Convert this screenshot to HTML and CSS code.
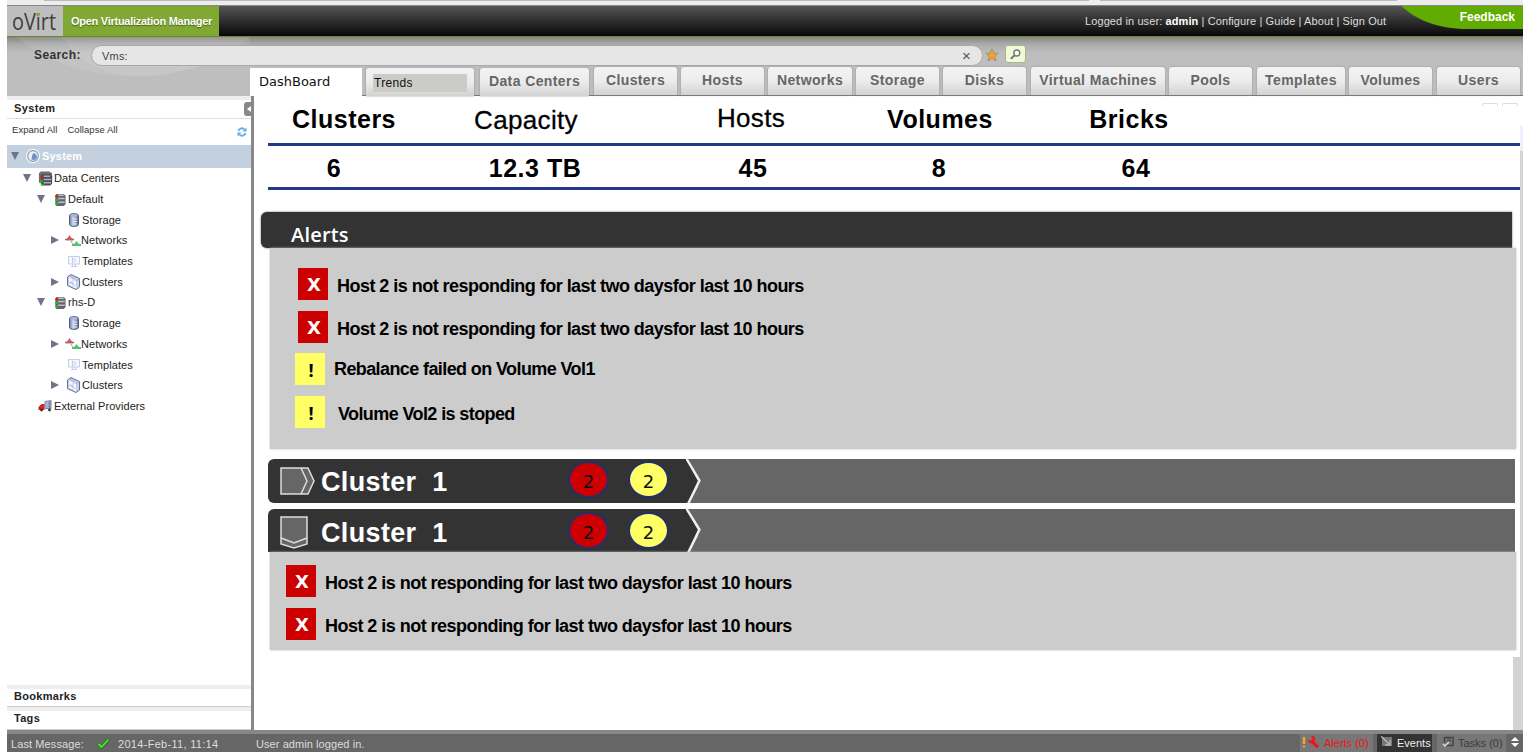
FILE: index.html
```html
<!DOCTYPE html>
<html lang="en">
<head>
<meta charset="utf-8">
<title>oVirt Open Virtualization Manager</title>
<link rel="stylesheet" href="styles.css">
</head>
<body>
<svg class="defs" width="0" height="0">
  <defs>
    <linearGradient id="cyl" x1="0" x2="1"><stop offset="0" stop-color="#707da8"/><stop offset=".4" stop-color="#cdd6ee"/><stop offset="1" stop-color="#59658c"/></linearGradient>
    <symbol id="dc" viewBox="0 0 12 14"><path d="M2 1h8l2 2v9l-2 2H2l-1-2V3z" fill="#66676d"/><path d="M4 2.500h6M4 6h7M4 10h7" stroke="#b9bfd0" stroke-width="1.600"/><path d="M1 3.500h3" stroke="#e01818" stroke-width="2.400"/><path d="M1 7.500h2.600M1 11.500h2.600" stroke="#16c61c" stroke-width="2.200"/></symbol>
    <symbol id="dcs" viewBox="0 0 16 16"><path d="M1 3l2-2h9l3 2v10H1z" fill="#6c6d72"/><path d="M4 4h9l2 2v8l-2 2H4L3 14V6z" fill="#4b4c52"/><path d="M6 6h7M6 9.500h8M6 13h8" stroke="#a9b0c6" stroke-width="1.600"/><path d="M3 7.500h3" stroke="#e01818" stroke-width="2.200"/><path d="M2 11.500h3M3 15h3" stroke="#16c61c" stroke-width="2"/></symbol>
    <symbol id="storage" viewBox="0 0 10 14"><path d="M.5 2.500C.5 0 9.500 0 9.500 2.500v9c0 2.500-9 2.500-9 0z" fill="url(#cyl)" stroke="#555f80"/><ellipse cx="5" cy="2.500" rx="3.600" ry="1.300" fill="#aab6dc"/><path d="M4 6h4M4 8.500h4M4 11h4" stroke="#e9edfa"/></symbol>
    <symbol id="net" viewBox="0 0 16 13"><path d="M0 5.500h9M7 11h9" stroke="#777" stroke-width="1.600"/><path d="M1.500 5L3 3.500 4.500 1 6 3.500 8 5v1.200H1.500z" fill="#d0545a"/><path d="M8 10.500l2-1.500L11.500 7 13 9l2 1.500v1.500H8z" fill="#4fc766"/><path d="M6 7l1.500 2.500" stroke="#999"/></symbol>
    <symbol id="tpl" viewBox="0 0 12 11"><path d="M.5.5h11v7.500H.5zM3 10.500h6M4.500 8v2M7.500 8v2" fill="#f5f7fe" stroke="#c3cde8"/><path d="M4.500 2l3.500 2.300-3.500 2.300z" fill="#fff" stroke="#b2bedf" stroke-width=".8"/></symbol>
    <symbol id="cluster" viewBox="0 0 13 16"><path d="M.5 3L4 .5l8.500 4V13L9 15.500.5 11.500z" fill="#c8d1ea" stroke="#66708f"/><path d="M2 3.500l3.500 1.500v4L2 7.500zM6.500 6L9 7v4l-2.500-1zM2 8.500l3.500 1.500v2.500L2 11zM6.500 11L9 12v2.500L6.500 13.500z" fill="#f1f5ff"/><path d="M3 2l3 1.500M9 7l3-2.500M6 5l2.500-2M6 9.500L3 8" stroke="#8f9cbc" stroke-width=".7"/></symbol>
  </defs>
</svg>
<div class="app">
  <div class="browser-strip"></div>
  <header class="topbar">
    <div class="logo"><svg width="56" height="30" viewBox="0 0 56 30"><text x="5" y="24" class="logo-text" textLength="44" lengthAdjust="spacingAndGlyphs">oVirt</text><circle cx="31" cy="8.500" r="1.800" fill="#78a832"/></svg></div>
    <div class="product">Open Virtualization Manager</div>
    <nav class="userlinks">Logged in user: <b>admin</b> | Configure | Guide | About | Sign Out</nav>
    <div class="feedback"><svg width="122" height="24" viewBox="0 0 122 24"><path d="M0 0H122V23H61C30 21 14 12 0 0z" fill="#62ab00"/></svg><span>Feedback</span></div>
  </header>
  <section class="searchzone">
    <svg class="swoosh" width="1516" height="59" viewBox="0 0 1516 59"><path d="M10 0C50 35 120 50 190 30S240 10 243 0z" fill="#fff" opacity=".09"/><path d="M55 0C90 55 180 50 243 0z" fill="#fff" opacity=".07"/></svg>
    <div class="searchrow">
      <label>Search:</label>
      <div class="searchbox"><span>Vms:</span><i>×</i></div>
      <svg class="star" width="14" height="14" viewBox="0 0 14 14"><path d="M7 .8l1.800 4.200 4.500.3-3.400 3 1.100 4.600L7 10.400l-4 2.500 1.100-4.600-3.400-3L5.200 5z" fill="#f5a21c" stroke="#8f8b85" stroke-width=".8"/></svg>
      <div class="go"><svg width="11" height="11" viewBox="0 0 11 11"><circle cx="6.800" cy="4" r="3" fill="#fff" stroke="#777" stroke-width="1.400"/><path d="M4.800 6.200L.8 9.800" stroke="#777" stroke-width="2"/></svg></div>
    </div>
    <div class="tabs">
      <div class="tab active">DashBoard</div>
      <div class="tab trends"><span>Trends</span></div>
      <div class="tab t-dc">Data Centers</div>
      <div class="tab">Clusters</div>
      <div class="tab">Hosts</div>
      <div class="tab t-nw">Networks</div>
      <div class="tab">Storage</div>
      <div class="tab t-dk">Disks</div>
      <div class="tab t-vm">Virtual Machines</div>
      <div class="tab t-po">Pools</div>
      <div class="tab t-tp">Templates</div>
      <div class="tab t-vo">Volumes</div>
      <div class="tab">Users</div>
    </div>
  </section>
  <div class="body">
    <aside class="sidebar">
      <div class="side-title"><span>System</span><b class="collapse"></b></div>
      <div class="side-tools"><span>Expand All</span><span>Collapse All</span>
        <svg width="10" height="10" viewBox="0 0 10 10"><path d="M1.500 4C2 1 6 .5 7.500 2.500M8.500 6C8 9 4 9.500 2.500 7.500" fill="none" stroke="#62a8ec" stroke-width="1.800"/><path d="M9.500.5v4h-4zM.5 9.500v-4h4z" fill="#62a8ec"/></svg></div>
      <div class="tree">
        <div class="node sel"><i class="down"></i><svg width="14" height="14" viewBox="0 0 13 13"><circle cx="6.500" cy="6.500" r="6" fill="#e9eef6" stroke="#fff"/><circle cx="6.500" cy="6.500" r="5" fill="none" stroke="#8a97ad"/><path d="M6 5q2-2 3 0l1.500 2-1.500 3H5z" fill="#6f8fc4"/></svg><span>System</span></div>
        <div class="node d1"><i class="down"></i><svg width="15" height="16"><use href="#dcs"/></svg><span>Data Centers</span></div>
        <div class="node d2"><i class="down"></i><svg width="12" height="13"><use href="#dc"/></svg><span>Default</span></div>
        <div class="node d3"><svg width="10" height="14"><use href="#storage"/></svg><span>Storage</span></div>
        <div class="node d3"><i></i><svg class="wide" width="16" height="13"><use href="#net"/></svg><span>Networks</span></div>
        <div class="node d3"><svg width="12" height="11"><use href="#tpl"/></svg><span>Templates</span></div>
        <div class="node d3"><i></i><svg width="13" height="16"><use href="#cluster"/></svg><span>Clusters</span></div>
        <div class="node d2"><i class="down"></i><svg width="12" height="13"><use href="#dc"/></svg><span>rhs-D</span></div>
        <div class="node d3"><svg width="10" height="14"><use href="#storage"/></svg><span>Storage</span></div>
        <div class="node d3"><i></i><svg class="wide" width="16" height="13"><use href="#net"/></svg><span>Networks</span></div>
        <div class="node d3"><svg width="12" height="11"><use href="#tpl"/></svg><span>Templates</span></div>
        <div class="node d3"><i></i><svg width="13" height="16"><use href="#cluster"/></svg><span>Clusters</span></div>
        <div class="node d1"><svg width="14" height="12" viewBox="0 0 14 12"><path d="M6 1l7-1v9H6z" fill="#7f8cab"/><path d="M7 2l3-1v7H7z" fill="#a7b4d1"/><path d="M0 7l3-3h3v6H0z" fill="#d52525"/><circle cx="3" cy="10" r="1.400" fill="#333"/><circle cx="11" cy="10" r="1.400" fill="#333"/></svg><span>External Providers</span></div>
      </div>
      <div class="side-foot">Bookmarks</div>
      <div class="side-foot last">Tags</div>
    </aside>
    <div class="divider"></div>
    <main class="main">
      <div class="stats head"><span>Clusters</span><span class="reg">Capacity</span><span class="reg">Hosts</span><span>Volumes</span><span>Bricks</span></div>
      <div class="stats vals"><span>6</span><span>12.3 TB</span><span>45</span><span>8</span><span>64</span></div>
      <div class="alerts-head">Alerts</div>
      <div class="panel alerts">
        <div class="alert"><b class="x">X</b><span>Host 2 is not responding for last two daysfor last 10 hours</span></div>
        <div class="alert"><b class="x">X</b><span>Host 2 is not responding for last two daysfor last 10 hours</span></div>
        <div class="alert warn"><b>!</b><span>Rebalance failed on Volume Vol1</span></div>
        <div class="alert warn lastw"><b>!</b><span>Volume Vol2 is stoped</span></div>
      </div>
      <div class="cluster">
        <div class="cl-name">
          <svg class="ind" width="36" height="28" viewBox="0 0 36 28"><path d="M1 1h27l6 13-6 13H1zM21 1l6 13-6 13" fill="#666" stroke="#ddd" stroke-width="1.500"/></svg>
          <h2>Cluster&nbsp; 1</h2><em class="red">2</em><em class="yellow">2</em>
        </div>
        <svg class="tip" width="20" height="44" viewBox="0 0 20 44"><path d="M1 0H20V44H3L15 22z" fill="#666"/><path d="M0 0H0L12 22 2 44H0z" fill="#333"/><path d="M0-1L13.500 21.500 2 45" fill="none" stroke="#eee" stroke-width="2.400"/></svg>
      </div>
      <div class="cluster open">
        <div class="cl-name">
          <svg class="ind" width="28" height="33" viewBox="0 0 28 33"><path d="M1 1h26v27l-13 4L1 28z" fill="#666" stroke="#ddd" stroke-width="1.500"/><path d="M1 22l13 5 13-5" fill="none" stroke="#ddd" stroke-width="1.500"/></svg>
          <h2>Cluster&nbsp; 1</h2><em class="red">2</em><em class="yellow">2</em>
        </div>
        <svg class="tip" width="20" height="43" viewBox="0 0 20 43"><path d="M1 0H20V43H3L15 21z" fill="#666"/><path d="M0 0H0L12 21 2 43H0z" fill="#333"/><path d="M0-1L13.500 20.500 2 44" fill="none" stroke="#eee" stroke-width="2.400"/></svg>
      </div>
      <div class="panel hosts">
        <div class="alert"><b class="x">X</b><span>Host 2 is not responding for last two daysfor last 10 hours</span></div>
        <div class="alert"><b class="x">X</b><span>Host 2 is not responding for last two daysfor last 10 hours</span></div>
      </div>
      <div class="rail"></div><div class="rail-low"></div><div class="rail-top"></div>
      <div class="stubs"><i></i><i></i></div>
    </main>
  </div>
  <footer class="status">
    <span class="lm">Last Message:</span>
    <svg class="check" width="13" height="11" viewBox="0 0 13 11"><path d="M1 6l3.500 3.500L12 1" fill="none" stroke="#1d7a12" stroke-width="3"/><path d="M1.500 6l3 3L11.500 1.500" fill="none" stroke="#4be62d" stroke-width="1.800"/></svg>
    <span class="date">2014-Feb-11, 11:14</span>
    <span class="msg">User admin logged in.</span>
    <div class="btn al"><svg width="18" height="13" viewBox="0 0 18 13"><path d="M2 1v7M2 9.500v2" stroke="#f5a623" stroke-width="2.400"/><path d="M9 5l7 6" stroke="#f01414" stroke-width="3"/><path d="M6.500 4.500Q10 8 11.500 4.500T9.500 1" fill="none" stroke="#f01414" stroke-width="2.400"/></svg><span>Alerts (0)</span></div>
    <div class="btn ev"><svg width="12" height="12" viewBox="0 0 12 12"><path d="M1 1h10v9H1z" fill="#777"/><path d="M0 0l9 9M9 4v5H4" fill="none" stroke="#bbb" stroke-width="1.300"/></svg><span>Events</span></div>
    <div class="btn tk"><svg width="12" height="12" viewBox="0 0 12 12"><path d="M2.500 1.500h8.500v8H4" fill="none" stroke="#444" stroke-width="1.500"/><path d="M5 3h4M5 5h4" stroke="#444"/><path d="M2.500 1v6" stroke="#444" stroke-width="1.500"/><path d="M1 8l2 2 4-4" fill="none" stroke="#ddd" stroke-width="1.400"/></svg><span>Tasks (0)</span></div>
    <svg class="updown" width="8" height="12" viewBox="0 0 8 12"><path d="M0 5l4-4 4 4zM0 7l4 4 4-4z" fill="#fff"/></svg>
  </footer>
</div>
</body>
</html>
```
FILE: styles.css
```css
* { box-sizing: border-box; }
body { margin: 0; background: #fff; font-family: "Liberation Sans", Arial, sans-serif; width: 1532px; height: 752px; overflow: hidden; }
.defs { position: absolute; }
svg { display: block; flex: none; }
span, nav, label, h2 { white-space: nowrap; }
.app { margin-left: 7px; width: 1516px; height: 752px; display: flex; flex-direction: column; }
.browser-strip { height: 6px; background: linear-gradient(90deg, #ededed 37px, #bbb 37px, #bbb 1082px, #ededed 1082px, #ededed 1093px, #bbb 1093px, #bbb 1390px, #ededed 1390px) 0 0 / 100% 1px no-repeat, #ededed; border-bottom: 1px solid #888; flex: none; }

.topbar { height: 31px; flex: none; display: flex; background: linear-gradient(#555, #080808); border-bottom: 1px solid #668c26; position: relative; }
.logo { width: 56px; background: #bebebe; }
.logo-text { font: 23px "Open Sans", sans-serif; fill: #3e3e3e; }
.product { width: 156px; background: #80a832; color: #fff; font: bold 11px/30px "Liberation Sans", sans-serif; padding-left: 8px; letter-spacing: -.27px; white-space: nowrap; text-shadow: 0 1px 1px #47611a; }
.userlinks { margin-left: 866px; color: #ddd; font-size: 11px; line-height: 30px; letter-spacing: .1px; }
.userlinks b { color: #fff; }
.feedback { position: absolute; right: 0; top: 0; width: 122px; height: 24px; }
.feedback span { position: absolute; right: 8px; top: 3px; color: #fff; font: bold 12px/16px "Liberation Sans", sans-serif; }

.searchzone { height: 59px; flex: none; background: linear-gradient(#858585, #aaa 7px, #bebebe 16px); position: relative; }
.swoosh { position: absolute; left: 0; top: 0; }
.searchrow { height: 30px; padding-top: 8px; display: flex; position: relative; }
.searchrow label { width: 84px; padding-left: 27px; font: bold 12px/20px "Liberation Sans", sans-serif; color: #333; letter-spacing: .4px; }
.searchbox { width: 892px; height: 21px; background: #e6e6e6; border: 1px solid #a8a8aa; border-radius: 11px; display: flex; justify-content: space-between; padding: 0 11px 0 10px; font-size: 11px; line-height: 20px; color: #444; letter-spacing: .2px; }
.searchbox i { font: 15px/19px "Liberation Sans", sans-serif; color: #555; }
.star { margin: 3px 0 0 2px; }
.go { margin-left: 6px; width: 21px; height: 18px; background: #f1fad8; border: 1px solid #a9b589; border-radius: 3px; padding: 3px 4px; }

.tabs { display: flex; margin-left: 243px; height: 29px; border-bottom: 1px solid #777; position: relative; align-items: flex-start; }
.tab { width: 83px; height: 28px; margin-right: 4px; border-radius: 3px 3px 0 0; background: linear-gradient(#f3f3f3, #ececec 50%, #d2d2d2); box-shadow: 0 0 2px #888; color: #666; font: bold 14px/27px "Liberation Sans", sans-serif; letter-spacing: .4px; text-align: center; white-space: nowrap; flex: none; }
.active { width: 112px; background: #fff; color: #111; font: 13px/27px "DejaVu Sans", sans-serif; letter-spacing: 0; text-align: left; padding-left: 9px; border-radius: 0; box-shadow: none; margin-top: 1px; }
.trends { width: 108px; margin-right: 6px; padding: 6px 7px 0; margin-top: 1px; }
.trends span { display: block; height: 18px; background: #cbccc7; color: #111; font: 12px/18px "Liberation Sans", sans-serif; text-align: left; padding-left: 1px; letter-spacing: .3px; }
.t-dc { width: 109px; margin-right: 5px; margin-top: 1px; }
.t-nw { width: 84px; }
.t-dk { margin-right: 5px; }
.t-vm { width: 134px; }
.t-po { margin-right: 5px; }
.t-tp { width: 88px; }
.t-vo { margin-right: 5px; }

.body { height: 634px; flex: none; display: flex; }
.sidebar { width: 244px; display: flex; flex-direction: column; color: #222; }
.side-title { height: 23px; border-top: 4px solid #eee; border-bottom: 1px solid #ddd; padding-left: 7px; font: bold 11px/16px "Liberation Sans", sans-serif; letter-spacing: .4px; display: flex; justify-content: space-between; }
.collapse { width: 7px; height: 14px; margin-top: 2px; background: #888; border-radius: 3px 0 0 3px; padding: 4px 0 0 2px; }
.collapse::before { content: ""; display: block; border: 3px solid transparent; border-right: 4px solid #fff; border-left: 0; }
.side-tools { height: 26px; padding: 0 4px 5px 5px; display: flex; gap: 10px; align-items: center; font-size: 9.5px; color: #333; letter-spacing: .05px; }
.side-tools svg { margin-left: auto; margin-top: 4px; }
.tree { flex: 1; font-size: 11px; }
.node { height: 20.7px; display: flex; align-items: center; position: relative; }
.node span { letter-spacing: .07px; }
.node i { position: absolute; left: 44px; border: 4px solid transparent; border-left: 8px solid #6d758c; border-right: 0; }
.node i.down { border: 4px solid transparent; border-top: 8px solid #6d758c; border-bottom: 0; }
.sel { height: 23px; background: #c3d0e0; color: #fff; font-weight: bold; padding: 0 0 1px 19px; gap: 2px; }
.sel span { letter-spacing: .2px; }
.sel i.down { left: 4px; }
.d1 { padding-left: 31px; gap: 1px; }
.d1 i.down { left: 16px; }
.d1 svg { width: 15px; }
.d2 { padding-left: 47px; gap: 2px; }
.d2 i.down { left: 30px; }
.d2 svg { width: 12px; }
.d3 { padding-left: 58px; }
.d3 svg { margin: 0 auto; }
.d3 span { width: 169px; }
.d3 svg.wide { margin: 0; }
.side-foot { height: 22px; border-top: 4px solid #eee; border-bottom: 1px solid #ccc; padding-left: 7px; font: bold 11px/15px "Liberation Sans", sans-serif; letter-spacing: .3px; }
.side-foot.last { height: 23px; }
.divider { width: 3px; background: #888; }

.main { width: 1269px; position: relative; padding-left: 14px; }
.stats { width: 1252px; display: flex; border-bottom: 3px solid #213b88; font: bold 25px/30px "Liberation Sans", sans-serif; color: #000; letter-spacing: .5px; }
.stats span { width: 0; display: flex; justify-content: center; }
.head { height: 50px; padding: 8px 0 0 76px; }
.vals { height: 44px; padding: 7px 0 0 66px; }
.stats span:nth-child(1) { margin-right: 182px; }
.stats span:nth-child(2) { margin-right: 225px; }
.stats span:nth-child(3) { margin-right: 189px; }
.stats span:nth-child(4) { margin-right: 189px; }
.vals span:nth-child(1) { margin-right: 201px; }
.vals span:nth-child(2) { margin-right: 218px; }
.vals span:nth-child(3) { margin-right: 186px; }
.vals span:nth-child(4) { margin-right: 197px; }
.stats .reg { font: 26px/32px "Liberation Sans", sans-serif; letter-spacing: .35px; -webkit-text-stroke: .3px #000; }
.stats .reg + .reg { line-height: 29px; }
.alerts-head { margin: 22px 0 0 -7px; width: 1251px; height: 36px; border-radius: 6px 0 0 6px; background: #333; box-shadow: 0 0 2px #555; color: #fff; font: 600 20px/45px "Open Sans", sans-serif; padding-left: 30px; letter-spacing: .2px; }
.panel { margin-left: 2px; width: 1246px; background: #ccc; position: relative; box-shadow: 0 0 2px #bbb; }
.alerts { height: 201px; padding: 20px 0 0 28px; }
.alert { display: flex; height: 32px; margin-bottom: 10.7px; }
.alert b { width: 30px; height: 32px; background: #ffff66; font: bold 18px/34px "Open Sans", sans-serif; text-align: center; padding-left: 2px; flex: none; }
.alert b.x { background: #c00; color: #fff; font: bold 18px/33px "DejaVu Sans", sans-serif; }
.alert span { margin-left: 9px; font: bold 18px/36px "Liberation Sans", sans-serif; letter-spacing: -.53px; color: #000; }
.warn { margin-left: -3px; }
.warn span { line-height: 32px; letter-spacing: -.6px; }
.lastw span { margin-left: 13px; line-height: 37px; }
.cluster { display: flex; margin-top: 10px; width: 1247px; height: 44px; background: linear-gradient(90deg, transparent 430px, #666 430px); }
.cl-name { width: 418px; background: #333; border-radius: 6px 0 0 6px; display: flex; align-items: center; color: #fff; padding-left: 12px; }
.ind { margin-right: 5px; }
.cl-name h2 { margin: 0; padding-top: 2px; width: 248px; font: bold 27px/40px "Liberation Sans", sans-serif; letter-spacing: .35px; }
.cl-name em { width: 41px; height: 37px; margin: -3px 19px 0 0; border: 2px solid #20306f; border-radius: 50%; font: 18px/37px "DejaVu Sans", sans-serif; text-align: center; color: #111; flex: none; position: relative; left: 2px; }
.red { background: #c00; }
.yellow { background: #ffff66; }
.cluster.open { margin-top: 6px; height: 43px; }
.open .cl-name { border-radius: 6px 0 0 0; }
.open .ind { margin: 3px 13px 0 0; }
.open .cl-name h2 { padding-top: 4px; }
.open .cl-name em { margin-top: 0; }
.hosts { height: 98px; padding: 13px 0 0 16px; }
.rail { position: absolute; right: 0; top: 55px; width: 3px; height: 506px; background: #d3d3d3; }
.rail-low { position: absolute; right: 0; top: 561px; width: 10px; height: 73px; background: #d3d3d3; }
.rail-top { position: absolute; right: 0; top: 30px; width: 3px; height: 25px; background: #eef0ff; }
.stubs { position: absolute; right: 5px; top: 7px; display: flex; gap: 4px; }
.stubs i { width: 16px; height: 3px; border: 1px solid #ddd; border-bottom: 0; border-radius: 2px 2px 0 0; }

.status { height: 22px; flex: none; border-top: 4px solid #888; background: #666; color: #ddd; display: flex; font-size: 11px; line-height: 21px; }
.lm { width: 90px; padding-left: 4px; letter-spacing: .1px; }
.check { margin-top: 4px; }
.date { margin-left: 8px; width: 138px; letter-spacing: .3px; }
.msg { width: 1044px; letter-spacing: .07px; }
.btn { display: flex; height: 18px; flex: none; line-height: 18px; }
.btn svg { margin: 2px 4px 0 0; }
.al { background: #777; color: #f01414; width: 73px; padding-left: 2px; margin-right: 4px; }
.ev { background: #333; color: #eee; width: 55px; padding-left: 4px; margin-right: 5px; }
.tk { background: #777; color: #3c3c3c; width: 69px; padding-left: 5px; margin-right: 5px; }
.updown { margin-top: 2px; }
```
